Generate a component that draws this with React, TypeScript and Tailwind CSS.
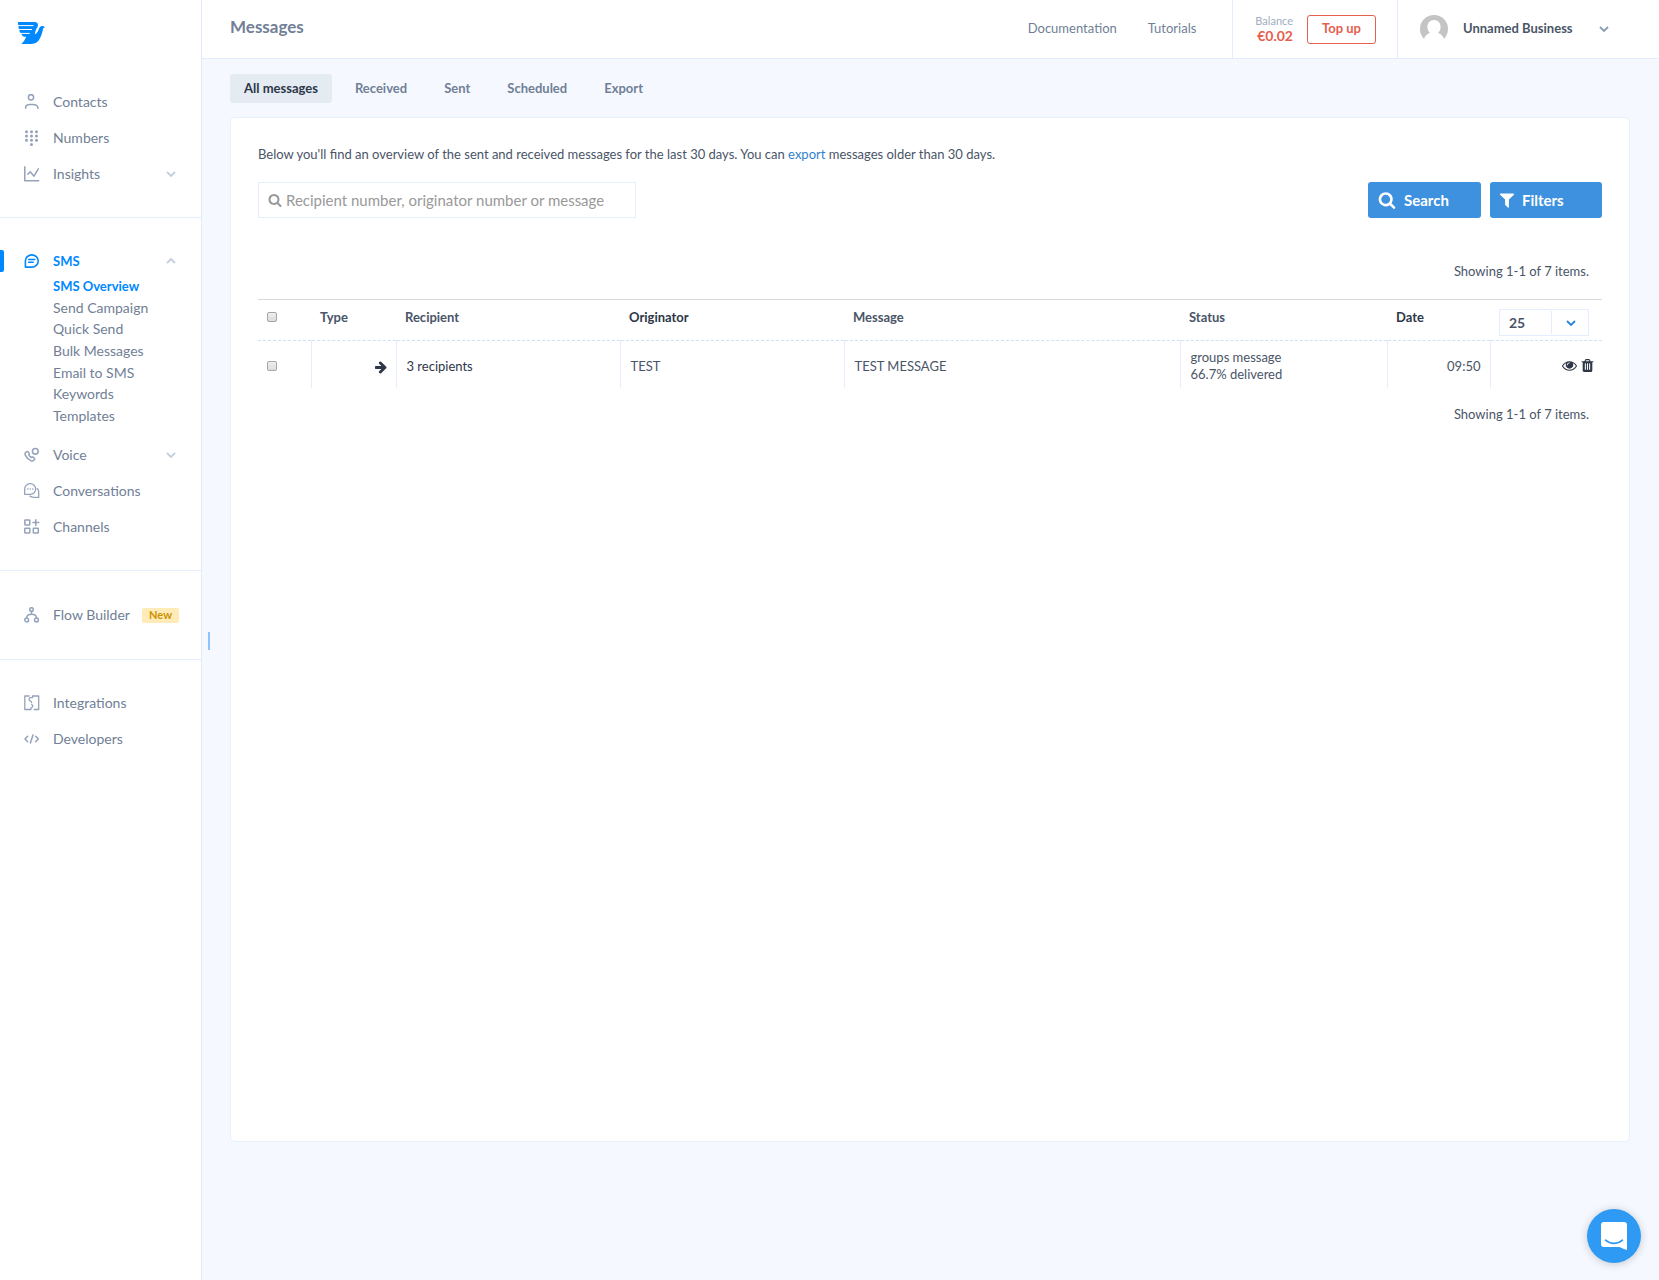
import type { ReactNode } from 'react';

const line = {
  fill: 'none',
  stroke: 'currentColor',
  strokeWidth: 1.5,
  strokeLinecap: 'round',
  strokeLinejoin: 'round',
} as const;

function NavSvg({ children }: { children: ReactNode }) {
  return (
    <svg viewBox="0 0 16 16" className="size-4 shrink-0" aria-hidden="true" {...line}>
      {children}
    </svg>
  );
}

const ContactsIcon = () => (
  <NavSvg>
    <circle cx="7" cy="3.3" r="2.6" />
    <path d="M1.700 14.200v-.8c0-2 1.800-3 4.300-3h2.800c2.500 0 5.200 1.200 5.200 4.200" />
  </NavSvg>
);

const NumbersIcon = () => (
  <NavSvg>
    <g fill="currentColor" stroke="none">
      {[2.5, 7.5, 12.5].map((x) =>
        [1.8, 6, 10.3].map((y) => <circle key={`${x}-${y}`} cx={x} cy={y} r="1.5" />),
      )}
      <circle cx="7.5" cy="14.4" r="1.5" />
    </g>
  </NavSvg>
);

const InsightsIcon = () => (
  <NavSvg>
    <path d="M.8.8v13.900h13.900M3.800 8.300l2.400-2.500 3.800 4.400 4.300-7.400" />
  </NavSvg>
);

const SmsIcon = () => (
  <NavSvg>
    <path d="M1.400 14.100V8a6.400 6.100 0 1 1 6.400 6.100z" strokeWidth="1.600" />
    <path d="M4.600 6.500h6.200M4.600 9.200h4.600" />
  </NavSvg>
);

const VoiceIcon = () => (
  <NavSvg>
    <circle cx="11.300" cy="4.300" r="2.900" />
    <path d="M2.200 4.900c-1.200.8-1.500 1.900-.9 3.200 1.200 2.600 2.900 4.300 5.500 5.500 1.400.7 2.900.3 3.600-.9.500-.8.300-1.400-.4-1.900l-1-.7c-.7-.5-1.200-.3-1.700.4-1.200-.6-2.100-1.400-2.600-2.700.7-.5.9-1 .4-1.700l-.8-1c-.6-.7-1.300-.8-2.100-.2z" />
  </NavSvg>
);

const ConversationsIcon = () => (
  <NavSvg>
    <path d="M.7 11.300V6.200A5.500 5.300 0 1 1 6.200 11.300z" strokeWidth="1.300" />
    <path d="M13.200 5.600c1.100 1 1.500 2.100 1.500 3.500v5.300H9.500c-1.600 0-2.700-.4-3.700-1.300" strokeWidth="1.300" />
    <path d="M3.700 6h.1M6.200 6h.1M8.700 6h.1" />
  </NavSvg>
);

const ChannelsIcon = () => (
  <NavSvg>
    <rect x=".8" y="1" width="5" height="4.900" rx=".6" />
    <rect x=".8" y="9.200" width="5" height="4.900" rx=".6" />
    <rect x="9.300" y="9.200" width="5" height="4.900" rx=".6" />
    <path d="M11.800.8v5.600M9 3.600h5.600" />
  </NavSvg>
);

const FlowIcon = () => (
  <NavSvg>
    <circle cx="7.500" cy="2.500" r="1.800" />
    <circle cx="2.700" cy="13" r="1.900" />
    <circle cx="12.500" cy="13" r="1.900" />
    <path d="M7.500 4.500v2.700M2.700 10.800C2.800 8.300 4.300 7.300 7.500 7.300s4.900 1 5 3.500" />
  </NavSvg>
);

const IntegrationsIcon = () => (
  <NavSvg>
    <path
      d="M5.200 1H.8v13.500h6.200v-1.700c2-.1 2.500-2.500.7-3.100M10.200 14.500h4.500V1H8.500v1.700H6.600c-1.700 0-2.100 2.600-.5 3.100 1 .3 1.600.7 1.600 2"
      strokeWidth="1.300"
    />
  </NavSvg>
);

const DevelopersIcon = () => (
  <NavSvg>
    <path d="M3.600 5.200 1 8l2.600 2.800M11.700 5.200 14.300 8l-2.600 2.800M9 4 6.400 12" />
  </NavSvg>
);

function Chevron({ className, up = false }: { className: string; up?: boolean }) {
  return (
    <svg viewBox="0 0 10 10" className={className} fill="none" stroke="currentColor" strokeWidth="1.800" aria-hidden="true">
      <path d={up ? 'M1 7l4-4 4 4' : 'M1 3l4 4 4-4'} />
    </svg>
  );
}

function Glyph({ d, className }: { d: string; className: string }) {
  return (
    <svg viewBox="0 0 1792 1792" className={className} fill="currentColor" aria-hidden="true">
      <path d={d} />
    </svg>
  );
}

const searchPath =
  'M1216 832q0-185-131.5-316.5t-316.5-131.5-316.5 131.5-131.5 316.5 131.5 316.5 316.5 131.5 316.5-131.5 131.5-316.5zm512 832q0 52-38 90t-90 38q-54 0-90-38l-343-342q-179 124-399 124-143 0-273.5-55.5t-225-150-150-225-55.5-273.5 55.5-273.5 150-225 225-150 273.5-55.5 273.5 55.5 225 150 150 225 55.5 273.5q0 220-124 399l343 343q37 37 37 90z';
const filterPath =
  'M1595 295q17 41-14 70l-493 493v742q0 42-39 59-13 5-25 5-27 0-45-19l-256-256q-19-19-19-45v-486l-493-493q-31-29-14-70 17-39 59-39h1280q42 0 59 39z';
const arrowPath =
  'M1600 960q0 54-37 91l-651 651q-39 37-91 37-51 0-90-37l-75-75q-38-38-38-91t38-91l293-293h-704q-52 0-84.5-37.5t-32.5-90.5v-128q0-53 32.5-90.5t84.5-37.5h704l-293-294q-38-36-38-90t38-90l75-75q38-38 90-38 53 0 91 38l651 651q37 35 37 90z';
const eyePath =
  'M1664 960q-152-236-381-353 61 104 61 225 0 185-131.5 316.5t-316.5 131.5-316.5-131.5-131.5-316.5q0-121 61-225-229 117-381 353 133 205 333.5 326.5t434.5 121.5 434.5-121.5 333.5-326.5zm-720-384q0-20-14-34t-34-14q-125 0-214.5 89.5t-89.5 214.5q0 20 14 34t34 14 34-14 14-34q0-86 61-147t147-61q20 0 34-14t14-34zm848 384q0 34-20 69-140 230-376.5 368.5t-499.5 138.5-499.5-139-376.5-368q-20-35-20-69t20-69q140-229 376.5-368t499.5-139 499.5 139 376.5 368q20 35 20 69z';
const trashPath =
  'M704 1376v-704q0-14-9-23t-23-9h-64q-14 0-23 9t-9 23v704q0 14 9 23t23 9h64q14 0 23-9t9-23zm256 0v-704q0-14-9-23t-23-9h-64q-14 0-23 9t-9 23v704q0 14 9 23t23 9h64q14 0 23-9t9-23zm256 0v-704q0-14-9-23t-23-9h-64q-14 0-23 9t-9 23v704q0 14 9 23t23 9h64q14 0 23-9t9-23zm-544-992h448l-48-117q-7-9-17-11h-317q-10 2-17 11zm928 32v64q0 14-9 23t-23 9h-96v948q0 83-47 143.5t-113 60.5h-832q-66 0-113-58.5t-47-141.5v-952h-96q-14 0-23-9t-9-23v-64q0-14 9-23t23-9h309l70-167q15-37 54-63t79-26h320q40 0 79 26t54 63l70 167h309q14 0 23 9t9 23z';

function NavItem({
  icon,
  label,
  chevron,
  badge,
  active = false,
}: {
  icon: ReactNode;
  label: string;
  chevron?: 'up' | 'down';
  badge?: string;
  active?: boolean;
}) {
  return (
    <a
      href="#"
      className={
        active
          ? 'relative flex h-9 items-center pr-[22px] pl-6 text-[13px] font-bold text-[#0088ff]'
          : 'relative flex h-9 items-center pr-[22px] pl-6 text-[#718096]'
      }
    >
      {active && <span className="absolute top-[7px] left-0 h-[22px] w-1 rounded-r-xs bg-[#0088ff]" />}
      <span className={active ? 'mr-[13px]' : 'mr-[13px] text-[#94a3bb]'}>{icon}</span>
      <span>{label}</span>
      {chevron && (
        <span className="mr-[3px] ml-auto text-[#c3cede]">
          <Chevron up={chevron === 'up'} className="size-[10px]" />
        </span>
      )}
      {badge && (
        <span className="ml-auto flex h-[15px] items-center rounded-xs bg-[#feebb8] px-[7px] text-[11px] font-bold text-[#cc9200]">
          {badge}
        </span>
      )}
    </a>
  );
}

const subItems = ['SMS Overview', 'Send Campaign', 'Quick Send', 'Bulk Messages', 'Email to SMS', 'Keywords', 'Templates'];

function Sidebar() {
  return (
    <aside className="w-[202px] shrink-0 border-r border-[#e0eafb] bg-white text-sm leading-4">
      <a href="#" aria-label="Home" className="block h-[84px] pt-[22px] pl-[18px] text-[#0088ff]">
        <svg viewBox="0 0 27 22" className="h-[22px] w-[27px]" fill="currentColor" aria-hidden="true">
          <path d="M0 0h16.500c2.200 0 3.500 1.200 3.500 2.900 0 1.300-.7 2.300-1.500 3.700-.8 1.500-1.100 3.300-1.700 5.600 2.300-.8 3.100-3 4-5 .8-2 1.800-3.200 3.400-3.200 1.300 0 2.200.6 2.800 1.600-1.400 0-1.800.7-2.200 2.300C23 15.500 20.500 22 12.600 22H3.200c2.300-1.900 3.900-4.300 5-7.200H7.400c-2 0-3.200-1-3.900-2.600C2.200 11 1.700 9.900 1.400 8.600.8 7.400.4 6 .5 4.600 0 3.200 0 1.600 0 0z" />
          <path d="M0 3.600h15.500M.5 7.500h13.500M1.500 11.400h10.300" stroke="#fff" strokeWidth="1" />
        </svg>
      </a>
      <nav aria-label="Main">
        <div className="border-b border-[#e3edfd] pb-[25px]">
          <NavItem icon={<ContactsIcon />} label="Contacts" />
          <NavItem icon={<NumbersIcon />} label="Numbers" />
          <NavItem icon={<InsightsIcon />} label="Insights" chevron="down" />
        </div>
        <div className="border-b border-[#e3edfd] py-[25px]">
          <NavItem icon={<SmsIcon />} label="SMS" chevron="up" active />
          <ul className="-mt-1 mb-[10px] grid h-[152px] auto-rows-fr items-center pl-[53px]">
            {subItems.map((item, i) => (
              <li key={item}>
                <a href="#" className={i === 0 ? 'text-[13px] font-bold text-[#0088ff]' : 'text-[#718096]'}>
                  {item}
                </a>
              </li>
            ))}
          </ul>
          <NavItem icon={<VoiceIcon />} label="Voice" chevron="down" />
          <NavItem icon={<ConversationsIcon />} label="Conversations" />
          <NavItem icon={<ChannelsIcon />} label="Channels" />
        </div>
        <div className="border-b border-[#e3edfd] py-[26px]">
          <NavItem icon={<FlowIcon />} label="Flow Builder" badge="New" />
        </div>
        <div className="pt-[25px]">
          <NavItem icon={<IntegrationsIcon />} label="Integrations" />
          <NavItem icon={<DevelopersIcon />} label="Developers" />
        </div>
      </nav>
    </aside>
  );
}

function Header() {
  return (
    <header className="flex h-[59px] items-stretch border-b border-[#e3edfd] bg-white text-[13px]">
      <h1 className="mb-1 flex flex-1 items-center pl-7 text-[17px] font-bold text-[#718096]">Messages</h1>
      <nav aria-label="Help" className="flex items-center gap-[31px] pr-9 text-[#718096]">
        <a href="#">Documentation</a>
        <a href="#">Tutorials</a>
      </nav>
      <div className="flex items-center border-x border-[#e3edfd] pr-[21px] pl-[22px]">
        <div className="mr-[14px] text-right">
          <div className="text-[11px] leading-[14px] text-[#a0aec0]">Balance</div>
          <div className="text-sm leading-4 font-bold text-[#e5604f]">€0.02</div>
        </div>
        <button type="button" className="h-[29px] w-[69px] rounded-[3px] border border-[#e5604f] text-[13px] font-bold text-[#e5604f]">
          Top up
        </button>
      </div>
      <button type="button" className="flex w-[261px] items-center pr-[50px] pl-[22px] text-left font-bold text-[#4a5568]">
        <svg viewBox="0 0 28 28" className="size-7" aria-hidden="true">
          <circle cx="14" cy="14" r="14" fill="#c4c4c4" />
          <path d="M14 5c4 0 6.600 3 6.600 7 0 2.600-1 4.600-2.600 6 3 .9 5 2.800 6 6v4H4v-4c1-3.200 3-5.100 6-6-1.600-1.400-2.600-3.400-2.600-6 0-4 2.600-7 6.600-7z" fill="#fff" />
        </svg>
        <span className="ml-[15px] whitespace-nowrap">Unnamed Business</span>
        <Chevron className="ml-auto size-[10px] shrink-0 text-[#8a9bb5]" />
      </button>
    </header>
  );
}

function Check({ label }: { label: string }) {
  return (
    <input
      type="checkbox"
      aria-label={label}
      className="block size-[10px] appearance-none rounded-xs border border-[#a6a6a6] bg-linear-to-b from-[#eeeeee] to-[#dcdcdc] checked:from-[#3e91de] checked:to-[#3e91de]"
    />
  );
}

const tabs = ['All messages', 'Received', 'Sent', 'Scheduled', 'Export'];

export default function App() {
  return (
    <div className="flex min-h-screen bg-[#f5f9ff] font-['Lato',sans-serif] text-[#4a5568]">
      <Sidebar />
      <div className="relative flex min-w-0 flex-1 flex-col">
        <Header />
        <button type="button" aria-label="Collapse sidebar" className="absolute top-[632px] left-[6px] h-[18px] w-[2px] bg-[#90c2fb]" />
        <nav aria-label="Messages" className="mt-[15px] ml-7 flex gap-[9px] text-[13px] font-bold text-[#718096]">
          {tabs.map((tab, i) => (
            <a
              key={tab}
              href="#"
              className={
                i === 0
                  ? 'flex h-[29px] items-center rounded-[3px] bg-[#e4ebf3] px-[14px] text-[#2d3748]'
                  : 'flex h-[29px] items-center px-[14px]'
              }
            >
              {tab}
            </a>
          ))}
        </nav>
        <main className="mt-[14px] mr-[29px] mb-[138px] ml-7 flex-1 rounded-[5px] border border-[#e6f1fd] bg-white px-[27px] pt-[27px] text-[13px]">
          <p className="leading-[18px]">
            Below you'll find an overview of the sent and received messages for the last 30 days. You can{' '}
            <a href="#" className="text-[#3182ce]">export</a> messages older than 30 days.
          </p>
          <form className="mt-[19px] flex gap-[9px]" onSubmit={(e) => e.preventDefault()}>
            <label className="mr-auto flex h-9 w-[378px] items-center gap-1 border border-[#e6edfb] pl-[9px] text-[#999999]">
              <Glyph d={searchPath} className="size-[14px] shrink-0" />
              <input
                type="text"
                aria-label="Search messages"
                placeholder="Recipient number, originator number or message"
                className="min-w-0 flex-1 bg-transparent text-[15px] text-[#4a5568] outline-none placeholder:text-[#999999]"
              />
            </label>
            <button type="submit" className="flex h-9 w-[113px] items-center rounded-[3px] bg-[#3e91de] pl-[10px] text-[15px] font-bold text-white">
              <Glyph d={searchPath} className="mr-2 size-[18px]" />
              Search
            </button>
            <button type="button" className="flex h-9 w-28 items-center rounded-[3px] bg-[#3e91de] pl-2 text-[15px] font-bold text-white">
              <Glyph d={filterPath} className="mr-[6px] size-[18px]" />
              Filters
            </button>
          </form>
          <div className="mt-11 pr-[13px] text-right leading-[18px]">Showing 1-1 of 7 items.</div>
          <table className="mt-[19px] w-full table-fixed border-collapse text-left">
            <thead>
              <tr className="h-[41px] border-t border-b border-t-[#d9dbdf] border-b-[#d2dff5] align-top [border-bottom-style:dashed]">
                <th className="w-[53px] pt-3 pl-[9px]">
                  <Check label="Select all messages" />
                </th>
                <th className="w-[85px] pt-2 pl-[9px] font-bold">Type</th>
                <th className="w-[224px] pt-2 pl-[9px] font-bold">Recipient</th>
                <th className="w-[224px] pt-2 pl-[9px] font-bold text-[#2d3748]">Originator</th>
                <th className="w-[336px] pt-2 pl-[9px] font-bold">Message</th>
                <th className="w-[207px] pt-2 pl-[9px] font-bold">Status</th>
                <th className="w-[103px] pt-2 pl-[9px] font-bold text-[#2d3748]">Date</th>
                <th className="w-[112px] pt-[9px] pr-[13px] pl-[9px]">
                  <div className="relative">
                    <select
                      aria-label="Items per page"
                      defaultValue="25"
                      className="block h-[27px] w-full appearance-none border border-[#e3edfd] bg-white pl-[9px] text-sm font-bold text-[#4a5568]"
                    >
                      <option>25</option>
                      <option>50</option>
                      <option>100</option>
                    </select>
                    <span className="pointer-events-none absolute inset-y-[2px] right-0 flex w-[38px] items-center justify-center border-l border-[#e3edfd] text-[#2b83d8]">
                      <Chevron className="size-[10px]" />
                    </span>
                  </div>
                </th>
              </tr>
            </thead>
            <tbody>
              <tr className="h-[47px] [&>td]:pt-1 [&>td+td]:border-l [&>td+td]:border-[#e6edfb]">
                <td className="pl-[9px]">
                  <Check label="Select message" />
                </td>
                <td>
                  <Glyph d={arrowPath} className="mt-[2px] mr-2 ml-auto size-[14px] text-[#2d3748]" />
                </td>
                <td className="pl-[10px] text-[#2d3748]">3 recipients</td>
                <td className="pl-[10px]">TEST</td>
                <td className="pl-[10px]">TEST MESSAGE</td>
                <td className="pl-[10px] leading-[17px]">
                  groups message
                  <br />
                  66.7% delivered
                </td>
                <td className="pr-[9px] text-right">09:50</td>
                <td className="pr-[7px]">
                  <div className="mb-[2px] flex justify-end gap-[3px] text-[#2d3748]">
                    <button type="button" aria-label="View">
                      <Glyph d={eyePath} className="size-[15px]" />
                    </button>
                    <button type="button" aria-label="Delete">
                      <Glyph d={trashPath} className="size-[15px]" />
                    </button>
                  </div>
                </td>
              </tr>
            </tbody>
          </table>
          <div className="mt-[17px] pr-[13px] text-right leading-[18px]">Showing 1-1 of 7 items.</div>
        </main>
      </div>
      <button
        type="button"
        aria-label="Open chat"
        className="fixed right-[18px] bottom-[17px] flex size-[54px] items-center justify-center rounded-full bg-[#2f9af3] shadow-[0_1px_8px_rgba(0,0,0,0.2)]"
      >
        <svg viewBox="0 0 26 28" className="h-7 w-[26px]" aria-hidden="true">
          <path d="M3 0h20a3 3 0 0 1 3 3v25c-2.500-.8-5-1.800-7.500-3H3a3 3 0 0 1-3-3V3a3 3 0 0 1 3-3z" fill="#fff" />
          <path d="M4.500 18.200c5 4.200 12 4.200 17 0" fill="none" stroke="#2f9af3" strokeWidth="1.600" strokeLinecap="round" />
        </svg>
      </button>
    </div>
  );
}
